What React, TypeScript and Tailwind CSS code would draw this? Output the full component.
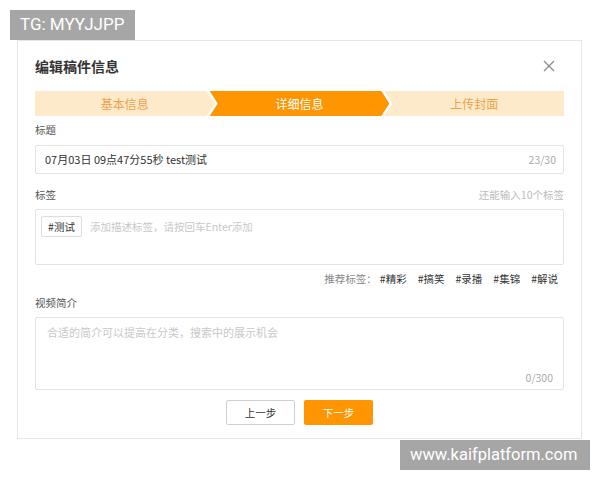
import React from "react";

const cjk = "font-['Noto_Sans_CJK_SC','Noto_Sans',sans-serif]";

export default function App() {
  const recs = ["#精彩", "#搞笑", "#录播", "#集锦", "#解说"];
  return (
    <div className={`relative w-[600px] h-[480px] bg-white overflow-hidden ${cjk}`}>
      <div className="pt-[40px] pl-[17px]">
        <div className="w-[565px] border border-[#e6e6e6] bg-white px-[17px] pt-[15px] pb-[13px] flex flex-col">
          {/* header */}
          <div className="flex items-center justify-between h-[20px]">
            <div className="text-[14px] leading-[20px] font-bold text-[#333]">编辑稿件信息</div>
            <svg width="12" height="12" viewBox="0 0 12 12" className="mr-[9px]">
              <path d="M1 1L11 11M11 1L1 11" stroke="#8c8c8c" strokeWidth="1.3" fill="none" />
            </svg>
          </div>
          {/* steps */}
          <div className="mt-[15px] flex h-[25px]">
            <div className="flex-1 bg-[#fdeacb] text-[#eda24a] text-[12px] flex items-center justify-center [clip-path:polygon(0_0,calc(100%-8px)_0,100%_50%,calc(100%-8px)_100%,0_100%)]">
              基本信息
            </div>
            <div className="flex-1 -ml-[5px] bg-[#ff9500] text-white text-[12px] flex items-center justify-center [clip-path:polygon(0_0,calc(100%-8px)_0,100%_50%,calc(100%-8px)_100%,0_100%,8px_50%)]">
              详细信息
            </div>
            <div className="flex-1 -ml-[5px] bg-[#fdeacb] text-[#eda24a] text-[12px] flex items-center justify-center [clip-path:polygon(0_0,100%_0,100%_100%,0_100%,8px_50%)]">
              上传封面
            </div>
          </div>
          {/* title */}
          <div className="mt-[6px] text-[10.5px] leading-[16px] text-[#555]">标题</div>
          <div className="mt-[7px] h-[29px] border border-[#e3e3e3] rounded-[2px] flex items-center justify-between pl-[9px] pr-[7px]">
            <span className="text-[11px] text-[#333]">07月03日 09点47分55秒 test测试</span>
            <span className="text-[10.5px] text-[#aaa]">23/30</span>
          </div>
          {/* tags */}
          <div className="mt-[13px] flex justify-between items-center text-[10.5px] leading-[16px]">
            <span className="text-[#555]">标签</span>
            <span className="text-[#bbb]">还能输入10个标签</span>
          </div>
          <div className="mt-[6px] h-[56px] border border-[#e3e3e3] rounded-[2px] pl-[5px] pt-[6px]">
            <div className="flex items-center gap-[8px]">
              <span className="h-[21px] w-[41px] border border-[#dcdcdc] rounded-[2px] flex items-center justify-center text-[10.5px] text-[#333]">#测试</span>
              <span className="text-[10.5px] text-[#c8c8c8]">添加描述标签，请按回车Enter添加</span>
            </div>
          </div>
          <div className="mt-[6px] flex justify-end items-center text-[10.5px] leading-[16px] pr-[6px]">
            <span className="text-[#888] mr-[3px]">推荐标签：</span>
            <div className="flex gap-[11px] text-[#333]">
              {recs.map((r) => (
                <span key={r}>{r}</span>
              ))}
            </div>
          </div>
          {/* intro */}
          <div className="mt-[8px] text-[10.5px] leading-[16px] text-[#555]">视频简介</div>
          <div className="mt-[6px] h-[73px] border border-[#e3e3e3] rounded-[2px] pl-[11px] pr-[10px] pt-[6px] pb-[3px] flex flex-col justify-between">
            <span className="text-[11px] text-[#c8c8c8]">合适的简介可以提高在分类，搜索中的展示机会</span>
            <span className="self-end text-[10.5px] text-[#aaa]">0/300</span>
          </div>
          {/* buttons */}
          <div className="mt-[10px] flex justify-center gap-[9px]">
            <button className="h-[25px] w-[69px] border border-[#cfcfcf] rounded-[2px] bg-white text-[10.5px] text-[#333]">上一步</button>
            <button className="h-[25px] w-[69px] rounded-[2px] bg-[#ff9500] text-[10.5px] text-white">下一步</button>
          </div>
        </div>
      </div>
      <div className="absolute left-[10px] top-[10px] w-[125px] h-[30px] bg-[#a6a6a6] text-white text-[17px] flex items-center pl-[10px] font-['Roboto',sans-serif]">
        TG: MYYJJPP
      </div>
      <div className="absolute left-[400px] top-[440px] w-[190px] h-[30px] bg-[#a6a6a6] text-white text-[16.5px] flex items-center pl-[10px] font-['Roboto',sans-serif]">
        www.kaifplatform.com
      </div>
    </div>
  );
}
